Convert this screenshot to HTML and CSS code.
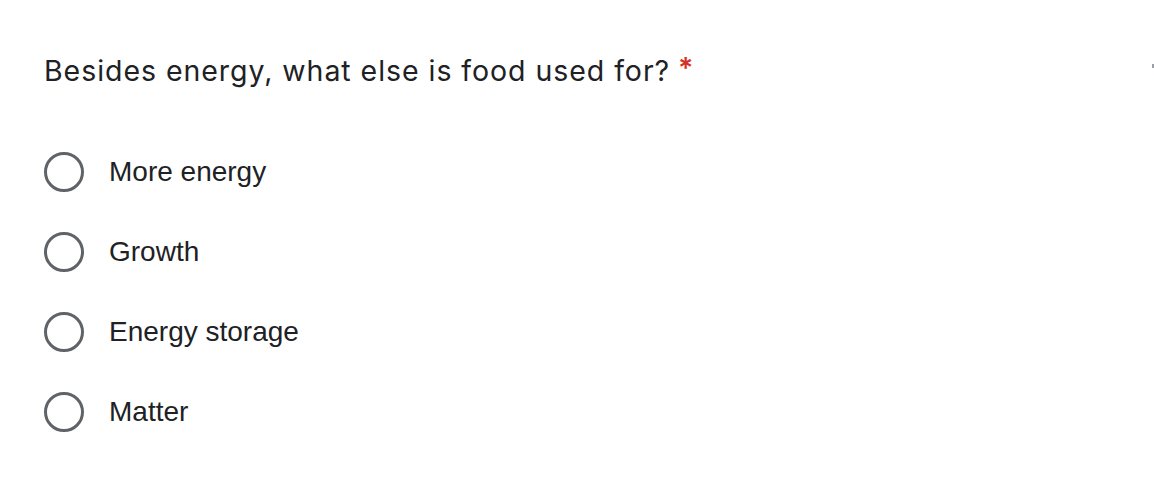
FILE: index.html
```html
<!DOCTYPE html>
<html lang="en">
<head>
<meta charset="utf-8">
<title>Question</title>
<link rel="stylesheet" href="styles.css">
</head>
<body>
<div class="card">
  <div class="question">Besides energy, what else is food used for?<span class="req">*</span></div>
  <div class="options">
    <label class="option"><span class="radio"></span><span class="label">More energy</span></label>
    <label class="option"><span class="radio"></span><span class="label">Growth</span></label>
    <label class="option"><span class="radio"></span><span class="label">Energy storage</span></label>
    <label class="option"><span class="radio"></span><span class="label">Matter</span></label>
  </div>
  <span class="edge-dot"></span>
</div>
</body>
</html>
```

FILE: styles.css
```css
html, body {
  margin: 0;
  padding: 0;
  background: #ffffff;
}
.card {
  position: relative;
  width: 1154px;
  height: 480px;
  box-sizing: border-box;
  padding: 52px 0 0 44px;
}
.question {
  font-family: Inter, "Open Sans", sans-serif;
  font-size: 28.5px;
  line-height: 38px;
  color: #202124;
  letter-spacing: 0.95px;
}
.req {
  color: #d93025;
  margin-left: 8px;
  font-weight: 600;
  position: relative;
  top: -3px;
}
.options {
  display: flex;
  flex-direction: column;
  margin-top: 62px;
  gap: 40px;
}
.option {
  display: flex;
  align-items: center;
  height: 40px;
  gap: 25px;
}
.radio {
  width: 40px;
  height: 40px;
  box-sizing: border-box;
  border: 3px solid #5f6368;
  border-radius: 50%;
  flex: none;
}
.label {
  font-family: "Liberation Sans", Arial, sans-serif;
  font-size: 28px;
  color: #202124;
}
.edge-dot {
  position: absolute;
  right: 0;
  top: 64px;
  width: 2px;
  height: 4px;
  background: #9aa0a6;
}
```
